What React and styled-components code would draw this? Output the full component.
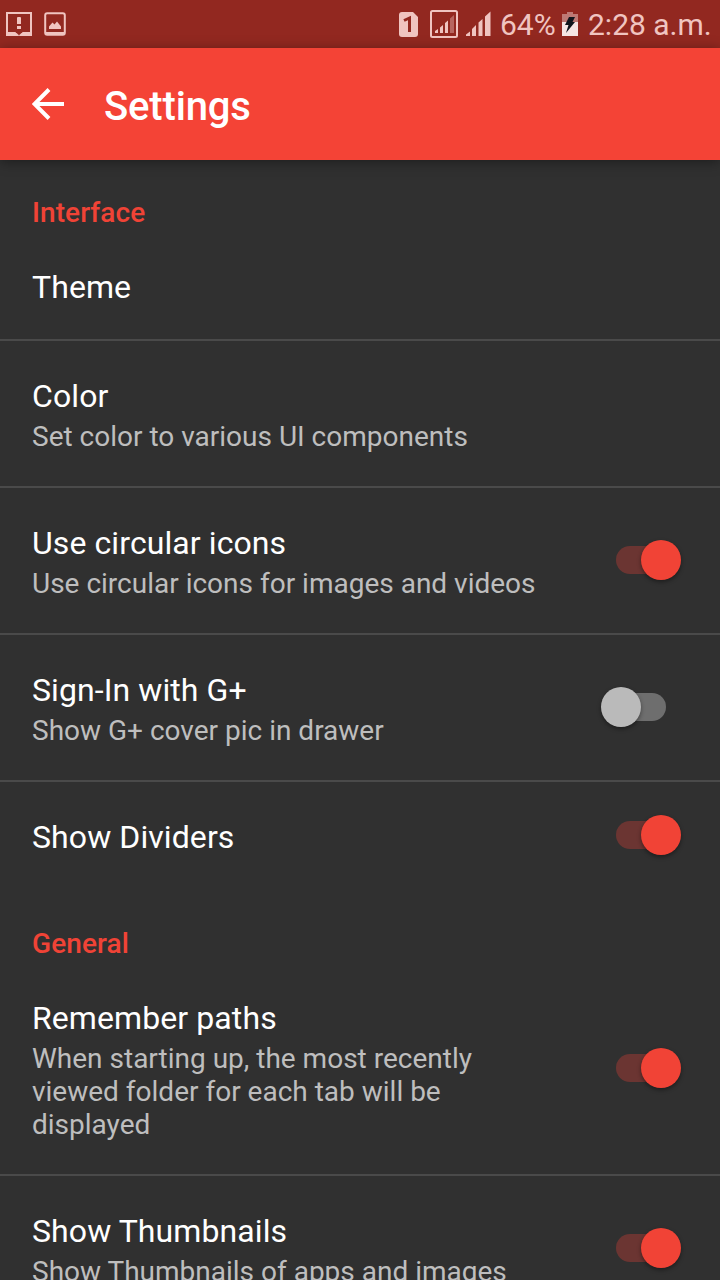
import React, { useState } from 'react'
import styled, { createGlobalStyle } from 'styled-components'

const GlobalStyle = createGlobalStyle`
    * {
        box-sizing: border-box;
    }
    body {
        margin: 0;
        background-color: #303030;
        font-family: Roboto, "Liberation Sans", sans-serif;
    }
`
const Screen = styled.div`
    width: 720px;
    height: 1280px;
    overflow: hidden;
    display: flex;
    flex-direction: column;
    background-color: #303030;
`
const StatusBar = styled.div`
    flex: none;
    height: 48px;
    padding: 0 10px 0 6px;
    display: flex;
    align-items: center;
    justify-content: space-between;
    background-color: #922820;
    color: #f0c4c0;
`
const StatusGroup = styled.div`
    display: flex;
    align-items: center;
`
const StatusIcon = styled.svg`
    display: block;
    flex: none;
    margin-left: ${props => props.$left || 0}px;
`
const StatusText = styled.span`
    margin-left: ${props => props.$left}px;
    padding-top: 2px;
    width: ${props => props.$width}px;
    font-size: 30px;
    line-height: 46px;
    letter-spacing: ${props => props.$spacing || 0}px;
    white-space: nowrap;
`
const AppBar = styled.header`
    flex: none;
    height: 112px;
    padding: 0 32px;
    display: flex;
    align-items: center;
    gap: 40px;
    background-color: #f44336;
    box-shadow: 0 2px 12px rgba(0, 0, 0, 0.4);
    color: #fff;
`
const BackButton = styled.button`
    width: 32px;
    height: 32px;
    padding: 0;
    border: none;
    background: none;
    color: inherit;
`
const BackIcon = styled.svg`
    display: block;
`
const PageTitle = styled.h1`
    margin: 0;
    padding-top: 6px;
    font-size: 40px;
    line-height: 48px;
    font-weight: 500;
    letter-spacing: -0.15px;
`
const SectionTitle = styled.h2`
    margin: 0;
    height: 72px;
    padding: 36px 32px 0;
    font-size: 28px;
    line-height: 33px;
    font-weight: 500;
    letter-spacing: 0.08px;
    color: #f04336;
`
const Row = styled.div`
    padding: 34px 39px 33px 32px;
    display: flex;
    align-items: center;
    justify-content: space-between;
    border-bottom: 2px solid ${props => props.$last ? 'transparent' : '#4a4a4a'};
`
const RowText = styled.div`
    max-width: ${props => props.$narrow ? '504px' : 'none'};
`
const RowTitle = styled.p`
    margin: 0;
    font-size: 32px;
    line-height: 40px;
    letter-spacing: 0.09px;
    padding-top: 1px;
    margin-bottom: -1px;
    color: #fff;
`
const Summary = styled.p`
    margin: 5px 0 0;
    font-size: 28px;
    line-height: 33px;
    color: #bebebe;
`
const Toggle = styled.button`
    flex: none;
    width: 80px;
    height: 40px;
    margin: -3px 0 0;
    padding: 0 15px;
    border: none;
    background: none;
    display: flex;
    align-items: center;
`
const Track = styled.span`
    width: 50px;
    height: 28px;
    border-radius: 14px;
    display: flex;
    align-items: center;
    background-color: ${props => props.$on ? '#6b3532' : '#6e6e6e'};
`
const Thumb = styled.span`
    flex: none;
    width: 40px;
    height: 40px;
    margin-left: ${props => props.$on ? 25 : -15}px;
    border-radius: 50%;
    background-color: ${props => props.$on ? '#f14336' : '#bababa'};
    box-shadow: 0 2px 4px rgba(0, 0, 0, 0.4);
`

const sections = [
    {
        title: 'Interface',
        items: [
            { title: 'Theme' },
            { title: 'Color', summary: 'Set color to various UI components' },
            { title: 'Use circular icons', summary: 'Use circular icons for images and videos', checked: true },
            { title: 'Sign-In with G+', summary: 'Show G+ cover pic in drawer', checked: false },
            { title: 'Show Dividers', checked: true },
        ],
    },
    {
        title: 'General',
        items: [
            { title: 'Remember paths', summary: 'When starting up, the most recently viewed folder for each tab will be displayed', checked: true },
            { title: 'Show Thumbnails', summary: 'Show Thumbnails of apps and images', checked: true },
        ],
    },
]

const Switch = ({ label, initial }) => {
    const [on, setOn] = useState(initial)
    return (
        <Toggle role="switch" aria-checked={on} aria-label={label} onClick={() => setOn(!on)}>
            <Track $on={on}>
                <Thumb $on={on} />
            </Track>
        </Toggle>
    )
}

const Status = () => (
    <StatusBar>
        <StatusGroup>
            <StatusIcon width="26" height="24" viewBox="0 0 26 24">
                <path d="M1 1H25V22H1Z" fill="none" stroke="currentColor" strokeWidth="2" />
                <path d="M0 20H9.5L13 23.5L16.5 20H26V24H0Z" fill="currentColor" />
                <path d="M9.5 20H16.5L13 23.2Z" fill="#922820" />
                <path d="M11 6Q11 5 12 5H14Q15 5 15 6V12H11ZM11 14H15V17H11Z" fill="currentColor" />
            </StatusIcon>
            <StatusIcon $left={12} width="22" height="24" viewBox="0 0 22 24">
                <rect x="1.2" y="1.2" width="19.6" height="21.6" rx="2" fill="none" stroke="currentColor" strokeWidth="2" />
                <path d="M1 20H21V22Q21 23 20 23H2Q1 23 1 22Z" fill="currentColor" />
                <path d="M5 17V14.5L8.5 10.5L10.5 12.5L13 9.5L17 14.5V17Z" fill="currentColor" />
            </StatusIcon>
        </StatusGroup>
        <StatusGroup>
            <StatusIcon width="19" height="25" viewBox="0 0 19 25">
                <path d="M3 0H14L19 5V22Q19 25 16 25H3Q0 25 0 22V3Q0 0 3 0Z" fill="currentColor" />
                <path d="M5 8.5L10.5 6V20" fill="none" stroke="#922820" strokeWidth="3" />
            </StatusIcon>
            <StatusIcon $left={12} width="28" height="28" viewBox="0 0 28 28">
                <rect x="1" y="1" width="26" height="26" rx="1.5" fill="none" stroke="currentColor" strokeWidth="2" />
                <path d="M5 23V21L8 19V23ZM10 23V17.5L13 15V23ZM15 23V13L18 10.5V23Z" fill="currentColor" />
                <path d="M20 23V8.5L24 5V23Z" fill="currentColor" opacity="0.4" />
            </StatusIcon>
            <StatusIcon $left={8} width="25" height="26" viewBox="0 0 25 26">
                <path d="M0 25V23.5L4 20.5V25ZM6 25V18L10 14V25ZM12.5 25V11.5L16.5 8V25ZM19 25V5.5L24.5 0.5V25Z" fill="currentColor" />
            </StatusIcon>
            <StatusText $left={9} $width={56}>64%</StatusText>
            <StatusIcon $left={6} width="16" height="24" viewBox="0 0 16 24">
                <path d="M0 2H5V0H11V2H16V10H0Z" fill="#bd7974" />
                <path d="M0 10H16V24H0Z" fill="#f6e5e4" />
                <path d="M7 5H13L10.5 10H13L4 21L6.5 13H3Z" fill="#10151c" />
            </StatusIcon>
            <StatusText $left={10} $width={122}>2:28 a.m.</StatusText>
        </StatusGroup>
    </StatusBar>
)

const App = () => {
    return (
        <>
            <GlobalStyle />
            <Screen>
                <Status />
                <AppBar>
                    <BackButton aria-label="Back">
                        <BackIcon width="32" height="32" viewBox="0 0 32 32">
                            <path d="M32 16H3M17 1.5L2.5 16L17 30.5" fill="none" stroke="currentColor" strokeWidth="4" />
                        </BackIcon>
                    </BackButton>
                    <PageTitle>Settings</PageTitle>
                </AppBar>
                {sections.map(section => (
                    <section key={section.title}>
                        <SectionTitle>{section.title}</SectionTitle>
                        {section.items.map((item, i) => {
                            const hasSwitch = item.checked !== undefined
                            return (
                                <Row key={item.title} $last={i === section.items.length - 1}>
                                    <RowText $narrow={hasSwitch}>
                                        <RowTitle>{item.title}</RowTitle>
                                        {item.summary && <Summary>{item.summary}</Summary>}
                                    </RowText>
                                    {hasSwitch && <Switch label={item.title} initial={item.checked} />}
                                </Row>
                            )
                        })}
                    </section>
                ))}
            </Screen>
        </>
    )
}

export default App
